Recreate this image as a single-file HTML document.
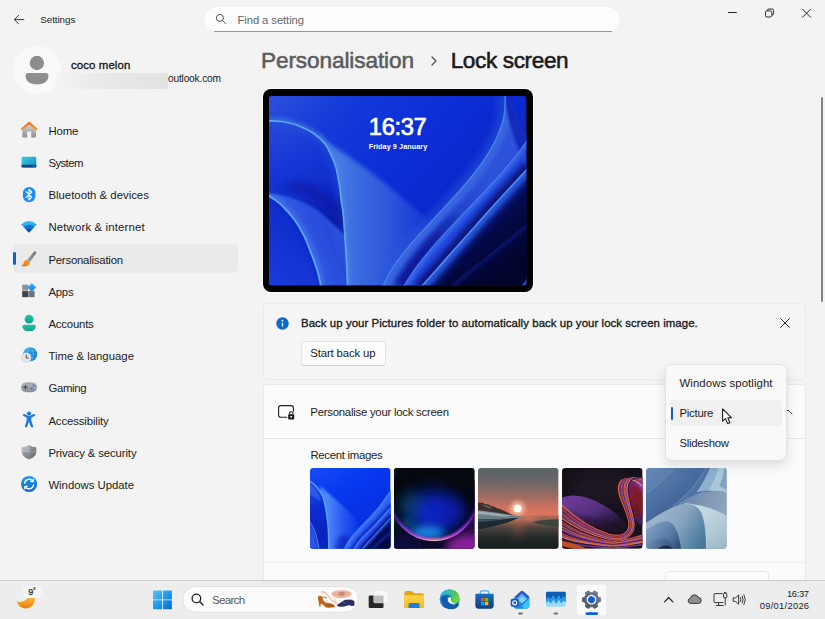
<!DOCTYPE html>
<html><head><meta charset="utf-8"><title>Settings</title>
<style>
*{box-sizing:border-box;margin:0;padding:0}
html,body{width:825px;height:619px;overflow:hidden;background:#f3f3f3;font-family:"Liberation Sans",sans-serif;color:#1b1b1b}
.a{position:absolute;white-space:nowrap}
.t{position:absolute;white-space:nowrap;line-height:16px;font-size:11.6px;transform-origin:0 50%}
.nav{left:48px;font-size:12px}
svg{position:absolute;overflow:visible}
</style></head><body>
<!-- TITLE BAR -->
<svg style="left:0;top:0" width="30" height="30" viewBox="0 0 30 30"><path d="M18.5 15.4 L14.4 19.6 L18.5 23.8 M14.4 19.6 H23.8" fill="none" stroke="#3a3a3a" stroke-width="1" stroke-linecap="round" stroke-linejoin="round"/></svg>
<div class="a" id="search" style="left:205.4px;top:7.1px;width:414px;height:25.3px;background:#fdfdfd;border-radius:12px;box-shadow:0 0 0 0.5px #f0f0f0"></div><div class="a" style="left:213.5px;top:30.9px;width:398px;height:1.25px;background:#979797;border-radius:0.6px"></div>
<svg style="left:215px;top:13.4px" width="12" height="12" viewBox="0 0 12 12"><circle cx="4.9" cy="4.9" r="3.5" fill="none" stroke="#4a4a4a" stroke-width="1"/><path d="M7.5 7.5 L10.6 10.6" stroke="#4a4a4a" stroke-width="1" stroke-linecap="round"/></svg>
<svg style="left:0;top:0" width="825" height="30" viewBox="0 0 825 30"><g fill="none" stroke="#2a2a2a" stroke-width="1"><path d="M728.3 12.5 H736.4" stroke-linecap="round"/><rect x="765.5" y="10.9" width="6.3" height="6.1" rx="1.5"/><path d="M767.4 10.6 V10.4 Q767.4 9 768.9 9 H772 Q773.6 9 773.6 10.6 V13.6 Q773.6 15.2 772.1 15.2"/><path d="M802.5 9.1 L810.7 17.3 M810.7 9.1 L802.5 17.3" stroke-linecap="round"/></g></svg>
<!-- scrollbar -->
<div class="a" style="left:820.8px;top:97.4px;width:2.2px;height:204.4px;background:#848484;border-radius:1.1px;box-shadow:0 0 0 0.6px #f8f8f8"></div>

<!-- SIDEBAR -->
<div class="a" style="left:13px;top:46px;width:48px;height:48px;border-radius:50%;background:#f9f9f9"></div>
<svg style="left:13px;top:46px" width="48" height="48" viewBox="0 0 48 48"><circle cx="23.9" cy="17" r="7.2" fill="#8d8d8d"/><path d="M12.6 29.6 Q12.6 27 15.2 27 H32.8 Q35.4 27 35.4 29.6 Q35.4 38.4 24 38.4 Q12.6 38.4 12.6 29.6Z" fill="#8d8d8d"/></svg>
<div class="a" style="left:56px;top:73px;width:112px;height:16px;background:linear-gradient(90deg,#f3f3f3 0%,#e9e9e9 40%,#e2e2e2 100%)"></div>

<div class="a" style="left:13px;top:244px;width:225px;height:29px;background:#eaeaea;border-radius:4px"></div>
<div class="a" style="left:12.9px;top:252.3px;width:2.8px;height:12.8px;background:#0f5fcc;border-radius:1.4px"></div>
<svg style="left:0;top:0" width="60" height="500" viewBox="0 0 60 500">
<defs>
<linearGradient id="iHomeR" x1="0" y1="0" x2="0" y2="1"><stop offset="0" stop-color="#e8721c"/><stop offset="1" stop-color="#f59a3a"/></linearGradient>
<linearGradient id="iHomeB" x1="0" y1="0" x2="0" y2="1"><stop offset="0" stop-color="#d6d6d6"/><stop offset="1" stop-color="#8e8e8e"/></linearGradient>
<linearGradient id="iSys" x1="0" y1="0" x2="1" y2="1"><stop offset="0" stop-color="#3ccbe6"/><stop offset="1" stop-color="#1588c6"/></linearGradient>
<linearGradient id="iWifi" x1="0" y1="0" x2="0" y2="1"><stop offset="0" stop-color="#38bdf4"/><stop offset="1" stop-color="#1a8ce0"/></linearGradient>
<linearGradient id="iBrushH" x1="1" y1="0" x2="0" y2="1"><stop offset="0" stop-color="#6e747c"/><stop offset="1" stop-color="#a0a6ae"/></linearGradient>
<linearGradient id="iBrushB" x1="1" y1="0" x2="0" y2="1"><stop offset="0" stop-color="#fba42c"/><stop offset="1" stop-color="#ea6a14"/></linearGradient>
<linearGradient id="iAcc" x1="0" y1="0" x2="0" y2="1"><stop offset="0" stop-color="#24c4a8"/><stop offset="1" stop-color="#12a08e"/></linearGradient>
<linearGradient id="iGlobe" x1="0" y1="0" x2="1" y2="1"><stop offset="0" stop-color="#30b4f0"/><stop offset="1" stop-color="#0f6cd0"/></linearGradient>
<linearGradient id="iShield" x1="0" y1="0" x2="1" y2="1"><stop offset="0" stop-color="#b4b8bc"/><stop offset="1" stop-color="#5c6066"/></linearGradient>
<linearGradient id="iPad" x1="0" y1="0" x2="0" y2="1"><stop offset="0" stop-color="#b2b6ba"/><stop offset="1" stop-color="#8c9096"/></linearGradient>
<linearGradient id="iUpd" x1="0" y1="0" x2="0" y2="1"><stop offset="0" stop-color="#1f96ea"/><stop offset="1" stop-color="#0c6cd0"/></linearGradient>
<linearGradient id="iDia" x1="0" y1="0" x2="1" y2="1"><stop offset="0" stop-color="#3cb4f6"/><stop offset="1" stop-color="#1c7ce0"/></linearGradient>
</defs>
<!-- Home -->
<path d="M22.3 128.6 L29.1 123.4 L36 128.6 V136.3 Q36 137.6 34.7 137.6 H31.2 V131.4 H27.2 V137.6 H23.6 Q22.3 137.6 22.3 136.3 Z" fill="url(#iHomeB)"/>
<path d="M21.9 129.2 L29.1 122.9 L36.3 129.2" fill="none" stroke="url(#iHomeR)" stroke-width="2.2" stroke-linecap="round" stroke-linejoin="round"/>
<!-- System -->
<rect x="21.6" y="156.7" width="14.7" height="10.8" rx="1.3" fill="url(#iSys)"/>
<path d="M21.6 164.8 H36.3 V166.2 Q36.3 167.5 35 167.5 H22.9 Q21.6 167.5 21.6 166.2 Z" fill="#0b4a7c"/>
<rect x="32.6" y="165.8" width="2.4" height="0.7" fill="#4aa0d0"/>
<!-- Bluetooth -->
<rect x="22.9" y="186.9" width="12.5" height="15.4" rx="6.2" fill="#1b8af2"/>
<path d="M26 191.6 L31.8 197.1 L29 199.9 V189.2 L31.8 192 L26 197.6" fill="none" stroke="#fff" stroke-width="1.15" stroke-linejoin="round" stroke-linecap="round"/>
<!-- Network -->
<path d="M29 232.6 L21 224.4 Q29 217.6 36.8 224.4 Z" fill="url(#iWifi)"/>
<path d="M29 232.6 L23.6 227 Q29 222.6 34.3 227 Z" fill="#1672d2"/>
<path d="M29 232.6 L26.2 229.7 Q29 227.6 31.8 229.7 Z" fill="#0c4fa8"/>
<!-- Personalisation brush -->
<path d="M35.6 251.5 Q36.9 252.4 36 253.8 L29.6 262.2 L26.9 260.2 L33.6 252 Q34.5 250.8 35.6 251.5Z" fill="url(#iBrushH)"/>
<path d="M26.6 259.8 L29.9 262.3 Q29.6 265.6 26 266.2 Q23.2 266.8 21.3 266 Q23.6 264.8 23.8 262.6 Q24.2 260.2 26.6 259.8Z" fill="url(#iBrushB)"/>
<!-- Apps -->
<rect x="22.2" y="284.6" width="6" height="6" fill="#8c9298"/>
<rect x="22.2" y="290.8" width="6" height="6.4" fill="#3c444c"/>
<rect x="28.4" y="290.8" width="6.2" height="6.4" fill="#70767e"/>
<path d="M22.2 290.6 H34.6" stroke="#f3f3f3" stroke-width="0.4"/>
<rect x="-3.1" y="-3.1" width="6.2" height="6.2" rx="0.6" transform="translate(31.8 287.4) rotate(45)" fill="url(#iDia)"/>
<!-- Accounts -->
<circle cx="29.1" cy="319.2" r="4.4" fill="url(#iAcc)"/>
<path d="M22.4 326.3 Q22.4 324.7 24 324.7 H34.2 Q35.8 324.7 35.8 326.3 Q35.8 331.3 29.1 331.3 Q22.4 331.3 22.4 326.3Z" fill="url(#iAcc)"/>
<!-- Time & language -->
<circle cx="30.2" cy="354.3" r="7" fill="url(#iGlobe)"/>
<g fill="none" stroke="#7ad0f8" stroke-width="0.5" opacity="0.8"><ellipse cx="30.2" cy="354.3" rx="3" ry="7"/><path d="M23.2 354.3 H37.2 M24.2 350.8 H36.2 M24.2 357.8 H36.2"/></g>
<circle cx="26.2" cy="357.6" r="4.9" fill="#e6e6e6" stroke="#c8c8c8" stroke-width="0.5"/>
<path d="M26.2 355 V358 H28.4" fill="none" stroke="#3a3a3a" stroke-width="0.9" stroke-linecap="round" stroke-linejoin="round"/>
<!-- Gaming -->
<rect x="21" y="382.2" width="16.1" height="10" rx="5" fill="url(#iPad)"/>
<path d="M25.4 385 V389.4 M23.2 387.2 H27.6" stroke="#3a3e44" stroke-width="1" />
<circle cx="33.8" cy="385.6" r="1" fill="#1a7ae8"/><circle cx="31.6" cy="388.6" r="1" fill="#1a7ae8"/>
<circle cx="28" cy="383.6" r="0.35" fill="#555"/><circle cx="30" cy="383.6" r="0.35" fill="#555"/>
<!-- Accessibility -->
<circle cx="29" cy="413.6" r="2.1" fill="#1a7ade"/>
<path d="M22.9 414.6 Q23.3 413.6 24.4 414 L29 416.2 L33.6 414 Q34.7 413.6 35.1 414.6 Q35.4 415.6 34.4 416.1 L31.3 417.8 V420.6 L33 426 Q33.3 427.1 32.3 427.4 Q31.3 427.7 30.9 426.7 L29 421.8 L27.1 426.7 Q26.7 427.7 25.7 427.4 Q24.7 427.1 25 426 L26.7 420.6 V417.8 L23.6 416.1 Q22.6 415.6 22.9 414.6Z" fill="#1a7ade"/>
<!-- Privacy -->
<path d="M29 444.9 Q32.6 447 36.3 447.2 V451.5 Q36.3 457 29 459.6 Q21.7 457 21.7 451.5 V447.2 Q25.4 447 29 444.9Z" fill="url(#iShield)"/>
<path d="M29 444.9 V459.6 M21.7 451.8 H36.3" stroke="#d0d2d4" stroke-width="0.45" opacity="0.7"/>
<path d="M29 444.9 Q25.4 447 21.7 447.2 V451.8 H29Z" fill="#c8cacc" opacity="0.5"/>
<!-- Windows Update -->
<circle cx="29.1" cy="484" r="8.1" fill="url(#iUpd)"/>
<g fill="none" stroke="#fff" stroke-width="1.3" stroke-linecap="round" stroke-linejoin="round">
<path d="M24.6 483.2 A4.6 4.6 0 0 1 32.9 481.2"/><path d="M33.3 479.2 V481.6 H30.9"/>
<path d="M33.6 484.8 A4.6 4.6 0 0 1 25.3 486.8"/><path d="M24.9 488.8 V486.4 H27.3"/>
</g>
</svg>


<!-- HEADER -->
<svg style="left:430.2px;top:56px" width="8" height="10" viewBox="0 0 8 10"><path d="M2 1 L6 5 L2 9" fill="none" stroke="#555" stroke-width="1.3" stroke-linecap="round" stroke-linejoin="round"/></svg>

<!-- PREVIEW -->
<div class="a" id="frame" style="left:263px;top:89px;width:269.5px;height:202.7px;background:#000;border-radius:8px;box-shadow:0 0 0 1px #fafafa"></div>
<svg id="wall" style="left:269.0px;top:95.8px" width="257.3" height="189.2" viewBox="0 0 257.3 189.2">
<defs>
<clipPath id="wc"><rect x="0" y="0" width="257.3" height="189.2" rx="2.5"/></clipPath>
<clipPath id="cL"><path d="M-3.0 24.9 C-2.5 24.9 -2.5 24.8 0.0 24.9 C2.5 25.0 7.5 24.8 12.2 25.5 C16.9 26.2 22.9 27.2 28.3 29.2 C33.7 31.2 39.9 34.2 44.5 37.3 C49.1 40.4 52.8 44.2 55.8 47.8 C58.8 51.4 60.3 55.1 62.2 59.1 C64.1 63.1 65.8 67.2 67.1 72.1 C68.4 76.9 69.4 82.8 70.3 88.2 C71.2 93.6 71.5 99.1 72.2 104.2 C72.9 109.3 73.7 112.1 74.3 118.6 C74.9 125.1 75.5 134.9 76.1 143.0 C76.6 151.1 77.2 158.7 77.6 166.9 C78.0 175.1 78.5 187.8 78.7 192.0 L-3 192 L-3 24.9 Z"/></clipPath>
<clipPath id="cR"><path d="M-3.0 24.9 C-2.5 24.9 -2.5 24.8 0.0 24.9 C2.5 25.0 7.5 24.8 12.2 25.5 C16.9 26.2 22.9 27.2 28.3 29.2 C33.7 31.2 39.9 34.2 44.5 37.3 C49.1 40.4 52.8 44.2 55.8 47.8 C58.8 51.4 60.3 55.1 62.2 59.1 C64.1 63.1 65.8 67.2 67.1 72.1 C68.4 76.9 69.4 82.8 70.3 88.2 C71.2 93.6 71.5 99.1 72.2 104.2 C72.9 109.3 73.7 112.1 74.3 118.6 C74.9 125.1 75.5 134.9 76.1 143.0 C76.6 151.1 77.2 158.7 77.6 166.9 C78.0 175.1 78.5 187.8 78.7 192.0 L260 192 L260 -3 L-3 -3 Z"/></clipPath>
<clipPath id="cBelowB"><path d="M-3.0 98.0 C-2.5 98.3 -2.5 98.1 0.0 99.9 C2.5 101.7 8.0 104.8 12.2 108.7 C16.4 112.6 21.3 118.2 25.1 123.3 C28.9 128.4 31.8 133.5 34.8 139.4 C37.8 145.3 40.5 152.9 42.8 158.8 C45.1 164.7 46.9 169.5 48.5 175.0 C50.1 180.5 51.8 189.2 52.5 192.0 L-3 192 Z"/></clipPath>
<clipPath id="cBf"><path d="M-3.0 98.0 C-2.5 98.3 -2.5 98.1 0.0 99.9 C2.5 101.7 8.0 104.8 12.2 108.7 C16.4 112.6 21.3 118.2 25.1 123.3 C28.9 128.4 31.8 133.5 34.8 139.4 C37.8 145.3 40.5 152.9 42.8 158.8 C45.1 164.7 46.9 169.5 48.5 175.0 C50.1 180.5 51.8 189.2 52.5 192.0 L80 192 L80 138.6 L75.3 138.6 C73.1 136.5 67.0 130.4 62.0 126.0 C57.0 121.6 52.0 116.2 45.0 112.0 C38.0 107.8 27.5 103.4 20.0 101.0 C12.5 98.6 3.3 98.1 0.0 97.5 Z"/></clipPath>
<clipPath id="c1"><path d="M236.1 -2.8 C236.0 0.8 236.5 11.7 235.2 19.0 C233.9 26.2 231.4 33.5 228.2 40.8 C225.0 48.0 220.8 55.3 216.0 62.5 C211.2 69.8 205.5 77.1 199.6 84.3 C193.7 91.6 187.1 98.8 180.5 106.1 C173.9 113.3 166.9 120.6 160.2 127.9 C153.6 135.1 146.7 142.4 140.7 149.6 C134.6 156.9 128.7 164.2 124.0 171.4 C119.3 178.7 114.5 189.6 112.6 193.2 L133.5 192.2 C135.5 189.1 141.2 179.7 145.7 173.4 C150.2 167.2 155.3 160.9 160.5 154.7 C165.8 148.4 171.5 142.2 177.2 135.9 C182.9 129.7 189.0 123.5 194.9 117.2 C200.9 111.0 207.0 104.7 212.9 98.5 C218.7 92.2 224.6 86.0 230.2 79.7 C235.7 73.5 241.2 67.2 246.1 61.0 C251.1 54.7 257.5 45.3 259.8 42.2 Z"/></clipPath>
<clipPath id="c2"><path d="M259.8 42.2 C257.5 45.3 251.1 54.7 246.1 61.0 C241.2 67.2 235.7 73.5 230.2 79.7 C224.6 86.0 218.7 92.2 212.9 98.5 C207.0 104.7 200.9 111.0 194.9 117.2 C189.0 123.5 182.9 129.7 177.2 135.9 C171.5 142.2 165.8 148.4 160.5 154.7 C155.3 160.9 150.2 167.2 145.7 173.4 C141.2 179.7 135.5 189.1 133.5 192.2 L151.0 192.2 C153.2 189.7 160.0 182.1 164.5 177.1 C169.0 172.0 173.5 167.0 177.9 161.9 C182.4 156.9 186.8 151.9 191.3 146.8 C195.8 141.8 200.3 136.7 204.8 131.7 C209.3 126.7 213.8 121.6 218.3 116.6 C222.8 111.5 227.4 106.5 232.0 101.5 C236.6 96.4 241.3 91.4 246.0 86.3 C250.7 81.3 257.8 73.7 260.2 71.2 Z"/></clipPath>
<clipPath id="c3"><path d="M260.2 71.2 C257.8 73.7 250.7 81.3 246.0 86.3 C241.3 91.4 236.6 96.4 232.0 101.5 C227.4 106.5 222.8 111.5 218.3 116.6 C213.8 121.6 209.3 126.7 204.8 131.7 C200.3 136.7 195.8 141.8 191.3 146.8 C186.8 151.9 182.4 156.9 177.9 161.9 C173.5 167.0 169.0 172.0 164.5 177.1 C160.0 182.1 153.2 189.7 151.0 192.2 L260 192 L260 70 Z"/></clipPath>
<clipPath id="c4"><path d="M260.1 126.2 C257.8 128.0 251.0 133.5 246.4 137.2 C241.9 140.9 237.3 144.5 232.7 148.2 C228.2 151.9 223.6 155.5 219.0 159.2 C214.4 162.9 209.8 166.5 205.2 170.2 C200.7 173.9 196.1 177.5 191.5 181.2 C186.9 184.9 180.0 190.4 177.7 192.2 L260 192 L260 125 Z"/></clipPath>
<clipPath id="cLeft1"><path d="M236.1 -2.8 C236.0 0.8 236.5 11.7 235.2 19.0 C233.9 26.2 231.4 33.5 228.2 40.8 C225.0 48.0 220.8 55.3 216.0 62.5 C211.2 69.8 205.5 77.1 199.6 84.3 C193.7 91.6 187.1 98.8 180.5 106.1 C173.9 113.3 166.9 120.6 160.2 127.9 C153.6 135.1 146.7 142.4 140.7 149.6 C134.6 156.9 128.7 164.2 124.0 171.4 C119.3 178.7 114.5 189.6 112.6 193.2 L-3 192 L-3 -3 Z"/></clipPath>
<linearGradient id="wbg" gradientUnits="userSpaceOnUse" x1="0" y1="0" x2="200" y2="189"><stop offset="0" stop-color="#2c50dc"/><stop offset="0.22" stop-color="#143ad9"/><stop offset="0.5" stop-color="#0b2ed6"/><stop offset="0.8" stop-color="#0a26c8"/><stop offset="1" stop-color="#0a1fb4"/></linearGradient>
<linearGradient id="gL" gradientUnits="userSpaceOnUse" x1="15" y1="30" x2="66" y2="135"><stop offset="0" stop-color="#2246da"/><stop offset="0.3" stop-color="#1638d6"/><stop offset="0.62" stop-color="#102ecc"/><stop offset="0.85" stop-color="#0a22b4"/><stop offset="1" stop-color="#071a9c"/></linearGradient>
<linearGradient id="gBf" gradientUnits="userSpaceOnUse" x1="22" y1="150" x2="80" y2="125"><stop offset="0" stop-color="#3c68e6"/><stop offset="0.2" stop-color="#3058e0"/><stop offset="0.6" stop-color="#284cdc"/><stop offset="1" stop-color="#2c54de"/></linearGradient>
<linearGradient id="gBl" gradientUnits="userSpaceOnUse" x1="0" y1="189" x2="40" y2="140"><stop offset="0" stop-color="#1a3cdc"/><stop offset="1" stop-color="#0f2ecc"/></linearGradient>
<linearGradient id="gA" gradientUnits="userSpaceOnUse" x1="72" y1="0" x2="175" y2="0"><stop offset="0" stop-color="#4678e4"/><stop offset="0.15" stop-color="#3c6ce0"/><stop offset="0.45" stop-color="#2e58dc"/><stop offset="0.8" stop-color="#1c40d6" stop-opacity="0.8"/><stop offset="1" stop-color="#0d2ed4" stop-opacity="0"/></linearGradient>
<linearGradient id="gN" gradientUnits="userSpaceOnUse" x1="200" y1="110" x2="245" y2="170"><stop offset="0" stop-color="#09167c"/><stop offset="0.3" stop-color="#050b50"/><stop offset="1" stop-color="#02042c"/></linearGradient>
<linearGradient id="gSh1" gradientUnits="userSpaceOnUse" x1="225" y1="85" x2="150" y2="170"><stop offset="0" stop-color="#0a1a98" stop-opacity="0"/><stop offset="0.35" stop-color="#0a1a98" stop-opacity="0.15"/><stop offset="0.7" stop-color="#0a1a98" stop-opacity="0.85"/><stop offset="1" stop-color="#0a1a98" stop-opacity="0.95"/></linearGradient>
<filter id="b05" x="-20%" y="-20%" width="140%" height="140%"><feGaussianBlur stdDeviation="0.6"/></filter>
<filter id="b1" x="-20%" y="-20%" width="140%" height="140%"><feGaussianBlur stdDeviation="1.2"/></filter>
<filter id="b2" x="-30%" y="-30%" width="160%" height="160%"><feGaussianBlur stdDeviation="2.2"/></filter>
<filter id="b3" x="-30%" y="-30%" width="160%" height="160%"><feGaussianBlur stdDeviation="3.5"/></filter>
<filter id="b6" x="-40%" y="-40%" width="180%" height="180%"><feGaussianBlur stdDeviation="7"/></filter>
</defs>
<g clip-path="url(#wc)">
<rect x="-3" y="-3" width="264" height="196" fill="url(#wbg)"/>
<!-- right-of-A: fan face -->
<g clip-path="url(#cR)">
  <ellipse cx="115" cy="200" rx="38" ry="55" fill="#0920b0" opacity="0.55" filter="url(#b6)"/>
  <g filter="url(#b2)"><path d="M50 36 L57 46 C95 68 140 105 185 150 L150 200 H70 Z" fill="url(#gA)"/></g>
  <path d="M-3.0 24.9 C-2.5 24.9 -2.5 24.8 0.0 24.9 C2.5 25.0 7.5 24.8 12.2 25.5 C16.9 26.2 22.9 27.2 28.3 29.2 C33.7 31.2 39.9 34.2 44.5 37.3 C49.1 40.4 52.8 44.2 55.8 47.8 C58.8 51.4 60.3 55.1 62.2 59.1 C64.1 63.1 65.8 67.2 67.1 72.1 C68.4 76.9 69.4 82.8 70.3 88.2 C71.2 93.6 71.5 99.1 72.2 104.2 C72.9 109.3 73.7 112.1 74.3 118.6 C74.9 125.1 75.5 134.9 76.1 143.0 C76.6 151.1 77.2 158.7 77.6 166.9 C78.0 175.1 78.5 187.8 78.7 192.0" fill="none" stroke="#4d86e6" stroke-width="7" opacity="0.55" filter="url(#b2)"/>
</g>
<!-- left region -->
<g clip-path="url(#cL)">
  <rect x="-3" y="-3" width="90" height="196" fill="url(#gL)"/>
  <path d="M-3.0 24.9 C-2.5 24.9 -2.5 24.8 0.0 24.9 C2.5 25.0 7.5 24.8 12.2 25.5 C16.9 26.2 22.9 27.2 28.3 29.2 C33.7 31.2 39.9 34.2 44.5 37.3 C49.1 40.4 52.8 44.2 55.8 47.8 C58.8 51.4 60.3 55.1 62.2 59.1 C64.1 63.1 65.8 67.2 67.1 72.1 C68.4 76.9 69.4 82.8 70.3 88.2 C71.2 93.6 71.5 99.1 72.2 104.2 C72.9 109.3 73.7 112.1 74.3 118.6 C74.9 125.1 75.5 134.9 76.1 143.0 C76.6 151.1 77.2 158.7 77.6 166.9 C78.0 175.1 78.5 187.8 78.7 192.0" fill="none" stroke="#3560e0" stroke-width="9" opacity="0.35" filter="url(#b3)"/>
  <path d="M10 92 C30 96 50 106 62 118 L76 132 L80 139 L80 120 C70 104 50 88 30 84 Z" fill="#0819a0" opacity="0.55" filter="url(#b3)"/>
  <!-- B face -->
  <g filter="url(#b1)"><path d="M-3.0 98.0 C-2.5 98.3 -2.5 98.1 0.0 99.9 C2.5 101.7 8.0 104.8 12.2 108.7 C16.4 112.6 21.3 118.2 25.1 123.3 C28.9 128.4 31.8 133.5 34.8 139.4 C37.8 145.3 40.5 152.9 42.8 158.8 C45.1 164.7 46.9 169.5 48.5 175.0 C50.1 180.5 51.8 189.2 52.5 192.0 L80 192 L80 138.6 L75.3 138.6 C73.1 136.5 67.0 130.4 62.0 126.0 C57.0 121.6 52.0 116.2 45.0 112.0 C38.0 107.8 27.5 103.4 20.0 101.0 C12.5 98.6 3.3 98.1 0.0 97.5 Z" fill="url(#gBf)"/></g>
  <g clip-path="url(#cBf)"><path d="M-3.0 98.0 C-2.5 98.3 -2.5 98.1 0.0 99.9 C2.5 101.7 8.0 104.8 12.2 108.7 C16.4 112.6 21.3 118.2 25.1 123.3 C28.9 128.4 31.8 133.5 34.8 139.4 C37.8 145.3 40.5 152.9 42.8 158.8 C45.1 164.7 46.9 169.5 48.5 175.0 C50.1 180.5 51.8 189.2 52.5 192.0" fill="none" stroke="#4674ea" stroke-width="9" opacity="0.7" filter="url(#b2)"/></g>
  <!-- below B -->
  <path d="M-3.0 98.0 C-2.5 98.3 -2.5 98.1 0.0 99.9 C2.5 101.7 8.0 104.8 12.2 108.7 C16.4 112.6 21.3 118.2 25.1 123.3 C28.9 128.4 31.8 133.5 34.8 139.4 C37.8 145.3 40.5 152.9 42.8 158.8 C45.1 164.7 46.9 169.5 48.5 175.0 C50.1 180.5 51.8 189.2 52.5 192.0 L-3 192 Z" fill="url(#gBl)"/>
  <path d="M-3.0 98.0 C-2.5 98.3 -2.5 98.1 0.0 99.9 C2.5 101.7 8.0 104.8 12.2 108.7 C16.4 112.6 21.3 118.2 25.1 123.3 C28.9 128.4 31.8 133.5 34.8 139.4 C37.8 145.3 40.5 152.9 42.8 158.8 C45.1 164.7 46.9 169.5 48.5 175.0 C50.1 180.5 51.8 189.2 52.5 192.0" fill="none" stroke="#0a24c0" stroke-width="6" opacity="0.35" filter="url(#b2)" clip-path="url(#cBelowB)"/>
  <path d="M-3.0 98.0 C-2.5 98.3 -2.5 98.1 0.0 99.9 C2.5 101.7 8.0 104.8 12.2 108.7 C16.4 112.6 21.3 118.2 25.1 123.3 C28.9 128.4 31.8 133.5 34.8 139.4 C37.8 145.3 40.5 152.9 42.8 158.8 C45.1 164.7 46.9 169.5 48.5 175.0 C50.1 180.5 51.8 189.2 52.5 192.0" fill="none" stroke="#5aa6ee" stroke-width="1.9" filter="url(#b05)"/>
</g>
<path d="M-3.0 24.9 C-2.5 24.9 -2.5 24.8 0.0 24.9 C2.5 25.0 7.5 24.8 12.2 25.5 C16.9 26.2 22.9 27.2 28.3 29.2 C33.7 31.2 39.9 34.2 44.5 37.3 C49.1 40.4 52.8 44.2 55.8 47.8 C58.8 51.4 60.3 55.1 62.2 59.1 C64.1 63.1 65.8 67.2 67.1 72.1 C68.4 76.9 69.4 82.8 70.3 88.2 C71.2 93.6 71.5 99.1 72.2 104.2 C72.9 109.3 73.7 112.1 74.3 118.6 C74.9 125.1 75.5 134.9 76.1 143.0 C76.6 151.1 77.2 158.7 77.6 166.9 C78.0 175.1 78.5 187.8 78.7 192.0" fill="none" stroke="#5aa8ea" stroke-width="1.7" filter="url(#b05)"/>

<!-- RIGHT SIDE -->
<!-- glow left of R1 -->
<g clip-path="url(#cLeft1)"><path d="M236.1 -2.8 C236.0 0.8 236.5 11.7 235.2 19.0 C233.9 26.2 231.4 33.5 228.2 40.8 C225.0 48.0 220.8 55.3 216.0 62.5 C211.2 69.8 205.5 77.1 199.6 84.3 C193.7 91.6 187.1 98.8 180.5 106.1 C173.9 113.3 166.9 120.6 160.2 127.9 C153.6 135.1 146.7 142.4 140.7 149.6 C134.6 156.9 128.7 164.2 124.0 171.4 C119.3 178.7 114.5 189.6 112.6 193.2" fill="none" stroke="#2a58dc" stroke-width="14" opacity="0.5" filter="url(#b3)"/></g>
<!-- band1 -->
<g clip-path="url(#c1)">
  <rect x="100" y="-3" width="160" height="196" fill="#2c52da"/>
  <path d="M236.1 -2.8 C236.0 0.8 236.5 11.7 235.2 19.0 C233.9 26.2 231.4 33.5 228.2 40.8 C225.0 48.0 220.8 55.3 216.0 62.5 C211.2 69.8 205.5 77.1 199.6 84.3 C193.7 91.6 187.1 98.8 180.5 106.1 C173.9 113.3 166.9 120.6 160.2 127.9 C153.6 135.1 146.7 142.4 140.7 149.6 C134.6 156.9 128.7 164.2 124.0 171.4 C119.3 178.7 114.5 189.6 112.6 193.2" fill="none" stroke="#3b68e0" stroke-width="14" opacity="0.9" filter="url(#b2)"/>
  <path d="M259.8 42.2 C257.5 45.3 251.1 54.7 246.1 61.0 C241.2 67.2 235.7 73.5 230.2 79.7 C224.6 86.0 218.7 92.2 212.9 98.5 C207.0 104.7 200.9 111.0 194.9 117.2 C189.0 123.5 182.9 129.7 177.2 135.9 C171.5 142.2 165.8 148.4 160.5 154.7 C155.3 160.9 150.2 167.2 145.7 173.4 C141.2 179.7 135.5 189.1 133.5 192.2" fill="none" stroke="url(#gSh1)" stroke-width="19" filter="url(#b2)"/>
  <!-- back side top right -->
  <path d="M236.9 -1.8 C237.0 -0.8 236.8 0.2 237.5 4.2 C238.2 8.2 239.6 16.4 241.0 22.2 C242.4 28.0 244.4 34.3 246.0 39.2 C247.6 44.1 249.7 49.1 250.7 51.9 C251.7 54.7 251.8 55.5 252.0 56.2 L262 47 L262 -3 Z" fill="#142cbc"/>
  <path d="M236.9 -1.8 C237.0 -0.8 236.8 0.2 237.5 4.2 C238.2 8.2 239.6 16.4 241.0 22.2 C242.4 28.0 244.4 34.3 246.0 39.2 C247.6 44.1 249.7 49.1 250.7 51.9 C251.7 54.7 251.8 55.5 252.0 56.2" fill="none" stroke="#142cbc" stroke-width="3" filter="url(#b1)"/>
</g>
<!-- band2 -->
<g clip-path="url(#c2)">
  <rect x="100" y="-3" width="160" height="196" fill="#2348de"/>
  <path d="M259.8 42.2 C257.5 45.3 251.1 54.7 246.1 61.0 C241.2 67.2 235.7 73.5 230.2 79.7 C224.6 86.0 218.7 92.2 212.9 98.5 C207.0 104.7 200.9 111.0 194.9 117.2 C189.0 123.5 182.9 129.7 177.2 135.9 C171.5 142.2 165.8 148.4 160.5 154.7 C155.3 160.9 150.2 167.2 145.7 173.4 C141.2 179.7 135.5 189.1 133.5 192.2" fill="none" stroke="#3564e4" stroke-width="8" opacity="0.9" filter="url(#b1)"/>
  <path d="M260.2 71.2 C257.8 73.7 250.7 81.3 246.0 86.3 C241.3 91.4 236.6 96.4 232.0 101.5 C227.4 106.5 222.8 111.5 218.3 116.6 C213.8 121.6 209.3 126.7 204.8 131.7 C200.3 136.7 195.8 141.8 191.3 146.8 C186.8 151.9 182.4 156.9 177.9 161.9 C173.5 167.0 169.0 172.0 164.5 177.1 C160.0 182.1 153.2 189.7 151.0 192.2" fill="none" stroke="#08147c" stroke-width="14" opacity="0.95" filter="url(#b2)"/>
</g>
<!-- band3 -->
<g clip-path="url(#c3)">
  <rect x="100" y="-3" width="160" height="196" fill="url(#gN)"/>
  <path d="M260.2 71.2 C257.8 73.7 250.7 81.3 246.0 86.3 C241.3 91.4 236.6 96.4 232.0 101.5 C227.4 106.5 222.8 111.5 218.3 116.6 C213.8 121.6 209.3 126.7 204.8 131.7 C200.3 136.7 195.8 141.8 191.3 146.8 C186.8 151.9 182.4 156.9 177.9 161.9 C173.5 167.0 169.0 172.0 164.5 177.1 C160.0 182.1 153.2 189.7 151.0 192.2" fill="none" stroke="#0f2aa8" stroke-width="20" opacity="0.6" filter="url(#b3)"/>
  <path d="M260.2 71.2 C257.8 73.7 250.7 81.3 246.0 86.3 C241.3 91.4 236.6 96.4 232.0 101.5 C227.4 106.5 222.8 111.5 218.3 116.6 C213.8 121.6 209.3 126.7 204.8 131.7 C200.3 136.7 195.8 141.8 191.3 146.8 C186.8 151.9 182.4 156.9 177.9 161.9 C173.5 167.0 169.0 172.0 164.5 177.1 C160.0 182.1 153.2 189.7 151.0 192.2" fill="none" stroke="#2c5ce2" stroke-width="11" opacity="0.95" filter="url(#b2)"/>
</g>
<g clip-path="url(#c4)">
  <path d="M260.1 126.2 C257.8 128.0 251.0 133.5 246.4 137.2 C241.9 140.9 237.3 144.5 232.7 148.2 C228.2 151.9 223.6 155.5 219.0 159.2 C214.4 162.9 209.8 166.5 205.2 170.2 C200.7 173.9 196.1 177.5 191.5 181.2 C186.9 184.9 180.0 190.4 177.7 192.2" fill="none" stroke="#0c1a80" stroke-width="7" opacity="0.7" filter="url(#b2)"/>
</g>
<g fill="none">
<path d="M236.1 -2.8 C236.0 0.8 236.5 11.7 235.2 19.0 C233.9 26.2 231.4 33.5 228.2 40.8 C225.0 48.0 220.8 55.3 216.0 62.5 C211.2 69.8 205.5 77.1 199.6 84.3 C193.7 91.6 187.1 98.8 180.5 106.1 C173.9 113.3 166.9 120.6 160.2 127.9 C153.6 135.1 146.7 142.4 140.7 149.6 C134.6 156.9 128.7 164.2 124.0 171.4 C119.3 178.7 114.5 189.6 112.6 193.2" stroke="#4a86e8" stroke-width="1.5" filter="url(#b05)" opacity="0.9"/>
<path d="M259.8 42.2 C257.5 45.3 251.1 54.7 246.1 61.0 C241.2 67.2 235.7 73.5 230.2 79.7 C224.6 86.0 218.7 92.2 212.9 98.5 C207.0 104.7 200.9 111.0 194.9 117.2 C189.0 123.5 182.9 129.7 177.2 135.9 C171.5 142.2 165.8 148.4 160.5 154.7 C155.3 160.9 150.2 167.2 145.7 173.4 C141.2 179.7 135.5 189.1 133.5 192.2" stroke="#4a80ea" stroke-width="1.4" filter="url(#b05)" opacity="0.85"/>
<path d="M260.2 71.2 C257.8 73.7 250.7 81.3 246.0 86.3 C241.3 91.4 236.6 96.4 232.0 101.5 C227.4 106.5 222.8 111.5 218.3 116.6 C213.8 121.6 209.3 126.7 204.8 131.7 C200.3 136.7 195.8 141.8 191.3 146.8 C186.8 151.9 182.4 156.9 177.9 161.9 C173.5 167.0 169.0 172.0 164.5 177.1 C160.0 182.1 153.2 189.7 151.0 192.2" stroke="#4f8cee" stroke-width="1.6" filter="url(#b05)"/>
</g>
<path d="M249 192 Q257 187 258 180 V192Z" fill="#2a4cd8"/>
</g>
<text x="128.6" y="38.9" text-anchor="middle" font-family="Liberation Sans, sans-serif" font-size="23.7" fill="#fff" stroke="#fff" stroke-width="0.7" letter-spacing="-0.35">16:37</text>
<text x="129" y="53.4" text-anchor="middle" font-family="Liberation Sans, sans-serif" font-weight="bold" font-size="7.3" fill="#fff" letter-spacing="0.05">Friday 9 January</text>
</svg>


<!-- INFO CARD -->
<div class="a" id="info" style="left:263px;top:303.3px;width:543px;height:77.2px;background:#f5f5f5;border:1px solid #e9e9e9;border-radius:4px"></div>
<svg style="left:276px;top:317px" width="13" height="13" viewBox="0 0 13 13"><circle cx="6.5" cy="6.5" r="6.2" fill="#0b6ad0"/><circle cx="6.5" cy="3.7" r="0.85" fill="#fff"/><rect x="5.85" y="5.4" width="1.3" height="4.3" rx="0.6" fill="#fff"/></svg>
<div class="a" id="btn" style="left:301px;top:340.5px;width:84.5px;height:25px;background:#fdfdfd;border:1px solid #e3e3e3;border-bottom-color:#cfcfcf;border-radius:4px"></div>
<svg style="left:780.3px;top:317.8px" width="10" height="10" viewBox="0 0 10 10"><path d="M0.6 0.6 L9.4 9.4 M9.4 0.6 L0.6 9.4" stroke="#2a2a2a" stroke-width="1" stroke-linecap="round"/></svg>

<!-- PERSONALISE CARD -->
<div class="a" id="card2" style="left:263px;top:383.8px;width:543px;height:200px;background:#fbfbfb;border:1px solid #e8e8e8;border-radius:4px"></div>
<div class="a" style="left:264px;top:438px;width:541px;height:1px;background:#e8e8e8"></div>
<div class="a" style="left:264px;top:561.7px;width:541px;height:1.2px;background:#ebebeb"></div>
<svg style="left:278px;top:405.1px" width="17" height="15" viewBox="0 0 17 15"><path d="M8.8 12.3 H3 Q0.6 12.3 0.6 9.9 V3 Q0.6 0.6 3 0.6 H13 Q15.4 0.6 15.4 3 V6.2" fill="none" stroke="#222" stroke-width="1.1" stroke-linecap="round"/><rect x="10.2" y="9.3" width="6" height="5.1" rx="0.7" fill="#1a1a1a"/><path d="M11.5 9.4 V8.4 Q11.5 6.7 13.2 6.7 Q14.9 6.7 14.9 8.4 V9.4" fill="none" stroke="#1a1a1a" stroke-width="1.05"/><rect x="12.3" y="11" width="1.8" height="1.5" rx="0.3" fill="#fbfbfb"/></svg>
<svg style="left:783px;top:409px" width="10" height="6" viewBox="0 0 10 6"><path d="M1 5 L5 1 L9 5" fill="none" stroke="#444" stroke-width="1" stroke-linecap="round" stroke-linejoin="round"/></svg>
<svg width="0" height="0" style="left:0;top:0"><defs>
<filter id="tb05" x="-30%" y="-30%" width="160%" height="160%"><feGaussianBlur stdDeviation="0.45"/></filter>
<filter id="tb1" x="-30%" y="-30%" width="160%" height="160%"><feGaussianBlur stdDeviation="1"/></filter>
<filter id="tb2" x="-40%" y="-40%" width="180%" height="180%"><feGaussianBlur stdDeviation="2"/></filter>
<filter id="tb4" x="-50%" y="-50%" width="200%" height="200%"><feGaussianBlur stdDeviation="4"/></filter>
<filter id="tb7" x="-60%" y="-60%" width="220%" height="220%"><feGaussianBlur stdDeviation="7"/></filter>
</defs></svg>
<svg style="left:310.3px;top:468.0px" width="80.6" height="80.8" viewBox="0 0 80 80" preserveAspectRatio="none">
<defs><clipPath id="tc0"><rect width="80" height="80" rx="3.2"/></clipPath><linearGradient id="t1bg" x1="0" y1="0" x2="0.6" y2="1"><stop offset="0" stop-color="#164cf4"/><stop offset="0.4" stop-color="#0638f0"/><stop offset="1" stop-color="#062ad8"/></linearGradient>
<linearGradient id="t1A" gradientUnits="userSpaceOnUse" x1="17" y1="0" x2="52" y2="0"><stop offset="0" stop-color="#4c88f8"/><stop offset="0.3" stop-color="#3668f4"/><stop offset="0.75" stop-color="#1a48ee" stop-opacity="0.7"/><stop offset="1" stop-color="#0638f0" stop-opacity="0"/></linearGradient>
<linearGradient id="t1L2" gradientUnits="userSpaceOnUse" x1="0" y1="20" x2="14" y2="60"><stop offset="0" stop-color="#1a44e4"/><stop offset="0.5" stop-color="#0c2cd0"/><stop offset="1" stop-color="#0a24c0"/></linearGradient>
<linearGradient id="t1N" gradientUnits="userSpaceOnUse" x1="62" y1="58" x2="76" y2="76"><stop offset="0" stop-color="#0c1a90"/><stop offset="0.4" stop-color="#060c58"/><stop offset="1" stop-color="#03063a"/></linearGradient></defs>
<g clip-path="url(#tc0)"><rect width="80" height="80" fill="url(#t1bg)"/>
<clipPath id="t1L"><path d="M-2 12 C4 15 9 20 12.7 28.3 C15 35 17 48 17.9 56.6 C18.4 64 18.6 72 18.7 82 L-2 82 Z"/></clipPath>
<clipPath id="t1R"><path d="M-2 12 C4 15 9 20 12.7 28.3 C15 35 17 48 17.9 56.6 C18.4 64 18.6 72 18.7 82 L82 82 L82 -2 L-2 -2 Z"/></clipPath>
<g clip-path="url(#t1R)"><g filter="url(#tb1)"><path d="M10 18 C25 30 42 46 56 62 L45 84 H16 Z" fill="url(#t1A)"/></g>
<ellipse cx="34" cy="82" rx="9" ry="16" fill="#0618b0" opacity="0.6" filter="url(#tb2)"/></g>
<g clip-path="url(#t1L)"><rect width="30" height="82" fill="url(#t1L2)"/>
<path d="M-2 14 C5 18 9 24 11 34 C8 30 3 27 -2 26Z" fill="#2d5cec" filter="url(#tb1)"/>
<path d="M-2 50 C2 56 5 62 6.5 68 C7.8 73 8.6 77 9.2 82 L-2 82Z" fill="#2a55e6"/>
<path d="M-2 50 C2 56 5 62 6.5 68 C7.8 73 8.6 77 9.2 82" fill="none" stroke="#0a22c0" stroke-width="3" opacity="0.5" filter="url(#tb1)"/>
<path d="M-2 50 C2 56 5 62 6.5 68 C7.8 73 8.6 77 9.2 82" fill="none" stroke="#4a8af2" stroke-width="0.9" filter="url(#tb05)"/></g>
<path d="M-2 12 C4 15 9 20 12.7 28.3 C15 35 17 48 17.9 56.6 C18.4 64 18.6 72 18.7 82" fill="none" stroke="#5aa4f6" stroke-width="1.4" filter="url(#tb05)"/>
<clipPath id="t1b1"><path d="M82 19.6 C78 25 74 31 69.3 37.3 C64 44 59 49 54.4 53.6 C49 59 45 64 41 68.6 C38 72 35.5 77 33 82 L82 82 Z"/></clipPath>
<clipPath id="t1b2"><path d="M82 36.5 C76 43 71 48.5 66.3 53.6 C61 59 56 64 51.4 68.6 C48 72 45 77 42 82 L82 82 Z"/></clipPath>
<clipPath id="t1b3"><path d="M82 47 C76 53.5 70 60 64.8 65.6 C60 70.5 55 76 50 82 L82 82 Z"/></clipPath>
<g clip-path="url(#t1b1)"><rect width="82" height="82" fill="#2c5ef4"/>
<path d="M82 19.6 C78 25 74 31 69.3 37.3 C64 44 59 49 54.4 53.6 C49 59 45 64 41 68.6 C38 72 35.5 77 33 82" fill="none" stroke="#3f74f2" stroke-width="5" filter="url(#tb1)"/>
<path d="M82 36.5 C76 43 71 48.5 66.3 53.6 C61 59 56 64 51.4 68.6 C48 72 45 77 42 82" fill="none" stroke="#0a1cb0" stroke-width="5" opacity="0.8" filter="url(#tb1)"/></g>
<g clip-path="url(#t1b2)"><rect width="82" height="82" fill="#2654f2"/>
<path d="M82 36.5 C76 43 71 48.5 66.3 53.6 C61 59 56 64 51.4 68.6 C48 72 45 77 42 82" fill="none" stroke="#3f78f2" stroke-width="3" filter="url(#tb05)"/>
<path d="M82 47 C76 53.5 70 60 64.8 65.6 C60 70.5 55 76 50 82" fill="none" stroke="#08108a" stroke-width="6" opacity="0.9" filter="url(#tb1)"/></g>
<g clip-path="url(#t1b3)"><rect width="82" height="82" fill="url(#t1N)"/>
<path d="M82 47 C76 53.5 70 60 64.8 65.6 C60 70.5 55 76 50 82" fill="none" stroke="#2c60ea" stroke-width="3.2" filter="url(#tb1)"/>
<path d="M82 62.5 C76 67 70 72.5 66.3 76 L60 82" fill="none" stroke="#1a34b8" stroke-width="2" opacity="0.8" filter="url(#tb1)"/></g>
<path d="M82 19.6 C78 25 74 31 69.3 37.3 C64 44 59 49 54.4 53.6 C49 59 45 64 41 68.6 C38 72 35.5 77 33 82" fill="none" stroke="#4a86f2" stroke-width="0.8" filter="url(#tb05)"/>
<path d="M82 47 C76 53.5 70 60 64.8 65.6 C60 70.5 55 76 50 82" fill="none" stroke="#4a8af4" stroke-width="0.9" filter="url(#tb05)"/>
</g></svg>
<svg style="left:394.2px;top:468.0px" width="80.6" height="80.8" viewBox="0 0 80 80" preserveAspectRatio="none">
<defs><clipPath id="tc1"><rect width="80" height="80" rx="3.2"/></clipPath><linearGradient id="t2mg" gradientUnits="userSpaceOnUse" x1="0" y1="30" x2="0" y2="58"><stop offset="0" stop-color="#000"/><stop offset="0.5" stop-color="#666"/><stop offset="1" stop-color="#fff"/></linearGradient><mask id="t2m" maskUnits="userSpaceOnUse" x="-5" y="-5" width="90" height="90"><rect x="-5" y="-5" width="90" height="90" fill="url(#t2mg)"/></mask><linearGradient id="t2bg" x1="0" y1="0" x2="0" y2="1"><stop offset="0" stop-color="#050a10"/><stop offset="1" stop-color="#0a0a28"/></linearGradient>
<radialGradient id="t2s" gradientUnits="userSpaceOnUse" cx="39" cy="46" r="40"><stop offset="0" stop-color="#0a20b0"/><stop offset="0.5" stop-color="#081450"/><stop offset="0.9" stop-color="#050a16"/><stop offset="1" stop-color="#05080f"/></radialGradient>
<linearGradient id="t2rim" gradientUnits="userSpaceOnUse" x1="0" y1="40" x2="80" y2="40"><stop offset="0" stop-color="#5a20d0"/><stop offset="0.25" stop-color="#b040e0"/><stop offset="0.5" stop-color="#ff70b0"/><stop offset="0.75" stop-color="#c040e8"/><stop offset="1" stop-color="#7020e0"/></linearGradient>
<linearGradient id="t2rim2" gradientUnits="userSpaceOnUse" x1="0" y1="40" x2="80" y2="40"><stop offset="0" stop-color="#7030e0" stop-opacity="0.8"/><stop offset="0.3" stop-color="#e070e8"/><stop offset="0.5" stop-color="#ffd0c8"/><stop offset="0.7" stop-color="#e070f0"/><stop offset="1" stop-color="#9030f0" stop-opacity="0.9"/></linearGradient></defs>
<g clip-path="url(#tc1)"><rect width="80" height="80" fill="#06080e"/>
<rect width="80" height="80" fill="url(#t2bg)"/>
<ellipse cx="6" cy="30" rx="22" ry="26" fill="#07303a" opacity="0.8" filter="url(#tb7)"/>
<ellipse cx="82" cy="42" rx="14" ry="22" fill="#4a1070" opacity="0.75" filter="url(#tb7)"/>
<ellipse cx="74" cy="80" rx="22" ry="15" fill="#9420a4" opacity="0.9" filter="url(#tb4)"/>
<ellipse cx="8" cy="80" rx="20" ry="14" fill="#0c1040" opacity="0.9" filter="url(#tb4)"/>
<clipPath id="t2c"><circle cx="39.5" cy="28.5" r="43.6"/></clipPath>
<g clip-path="url(#t2c)"><circle cx="39.5" cy="28.5" r="44" fill="url(#t2s)"/>
<ellipse cx="40" cy="44" rx="22" ry="16" fill="#0a26c4" opacity="0.95" filter="url(#tb7)"/>
<ellipse cx="16" cy="36" rx="11" ry="12" fill="#0a5484" opacity="0.6" filter="url(#tb7)"/>
<ellipse cx="58" cy="42" rx="13" ry="12" fill="#0a14a8" opacity="0.7" filter="url(#tb7)"/>
<ellipse cx="33" cy="64" rx="17" ry="6.5" fill="#1a90f0" opacity="0.95" filter="url(#tb4)"/>
<ellipse cx="14" cy="56" rx="7" ry="7" fill="#0a6a9a" opacity="0.6" filter="url(#tb4)"/>
<g mask="url(#t2m)"><circle cx="39.5" cy="28.5" r="43" fill="none" stroke="url(#t2rim)" stroke-width="3.4" filter="url(#tb1)"/></g>
</g>
<g mask="url(#t2m)"><circle cx="39.5" cy="28.5" r="43.5" fill="none" stroke="url(#t2rim2)" stroke-width="0.9" filter="url(#tb05)"/></g>
</g></svg>
<svg style="left:478.1px;top:468.0px" width="80.6" height="80.8" viewBox="0 0 80 80" preserveAspectRatio="none">
<defs><clipPath id="tc2"><rect width="80" height="80" rx="3.2"/></clipPath><linearGradient id="t3sky" x1="0" y1="0" x2="0" y2="1"><stop offset="0" stop-color="#566266"/><stop offset="0.18" stop-color="#6e6866"/><stop offset="0.36" stop-color="#a06c62"/><stop offset="0.5" stop-color="#d4705e"/><stop offset="0.6" stop-color="#de765e"/></linearGradient>
<linearGradient id="t3w" x1="0" y1="0" x2="0" y2="1"><stop offset="0" stop-color="#c06c58"/><stop offset="0.15" stop-color="#8e5c4e"/><stop offset="0.4" stop-color="#4c4440"/><stop offset="0.7" stop-color="#2a302e"/><stop offset="1" stop-color="#1a2222"/></linearGradient>
<linearGradient id="t3bot" x1="0" y1="0" x2="0" y2="1"><stop offset="0" stop-color="#1e2626" stop-opacity="0"/><stop offset="1" stop-color="#161e1e" stop-opacity="0.9"/></linearGradient></defs>
<g clip-path="url(#tc2)"><rect width="80" height="80" fill="url(#t3sky)"/>
<rect y="47" width="80" height="33" fill="url(#t3w)"/>
<ellipse cx="42" cy="49.5" rx="18" ry="3.5" fill="#d87a60" opacity="0.75" filter="url(#tb2)"/>
<ellipse cx="40" cy="60" rx="6" ry="12" fill="#a06048" opacity="0.5" filter="url(#tb4)"/>
<circle cx="39.3" cy="40" r="7.5" fill="#ffd0b0" opacity="0.7" filter="url(#tb2)"/>
<circle cx="39.3" cy="40" r="3.9" fill="#fffaf2" filter="url(#tb05)"/>
<g filter="url(#tb05)">
<path d="M-1 33.6 L2 34.6 L4 34.2 L7 35.8 L10 36 L13 37.6 L16 38 L19 39.8 L22 40.6 L25 42.2 L28 43.4 L31 45 L35 46.6 L-1 46.6Z" fill="#3a2e2e"/>
<path d="M-1 41.5 C8 42.4 20 44.2 34 46.5 C40 47.5 46 48.5 50 49 C40 50.5 20 50.4 -1 51Z" fill="#6e7e86"/>
<path d="M-1 42.6 C10 43.8 22 45.6 36 47.6 L24 48 C14 47 6 46 -1 45.6Z" fill="#a8b6bc" opacity="0.8"/>
<path d="M3 36 C7 36.8 10 38 14 39.6 L11 40 C8 38.8 5 37.4 3 36Z" fill="#8c9096" opacity="0.6"/>
<path d="M-1 51 C14 50.6 28 50.2 40 49.6 C32 53.5 18 58 8 59.4 L-1 61Z" fill="#1a2a30"/>
<path d="M-1 51 C10 51 20 50.6 30 50.2 C20 52 10 52.8 -1 53.2Z" fill="#4a5e66" opacity="0.8"/>
<path d="M54 53.6 C62 51.8 72 51 81 50.6 V58.5 C72 57.8 62 56 54 53.6Z" fill="#38443c" opacity="0.95"/>
<path d="M50 48.3 C60 48 70 47.5 81 47.2 V50 C70 50 60 49.3 50 48.3Z" fill="#a8645a" opacity="0.7"/>
</g>
<rect y="56" width="80" height="24" fill="url(#t3bot)"/>
</g></svg>
<svg style="left:562.0px;top:468.0px" width="80.6" height="80.8" viewBox="0 0 80 80" preserveAspectRatio="none">
<defs><clipPath id="tc3"><rect width="80" height="80" rx="3.2"/></clipPath><linearGradient id="t4fold" gradientUnits="userSpaceOnUse" x1="60" y1="14" x2="82" y2="50"><stop offset="0" stop-color="#6a2a88"/><stop offset="0.35" stop-color="#8a2238"/><stop offset="0.7" stop-color="#6e1826"/><stop offset="1" stop-color="#4a2060"/></linearGradient><linearGradient id="t4blob" gradientUnits="userSpaceOnUse" x1="20" y1="26" x2="40" y2="64"><stop offset="0" stop-color="#6a3a96"/><stop offset="0.45" stop-color="#54307c"/><stop offset="0.8" stop-color="#301c48"/><stop offset="1" stop-color="#20122c"/></linearGradient></defs>
<g clip-path="url(#tc3)"><rect width="80" height="80" fill="#17111a"/>
<ellipse cx="40" cy="20" rx="30" ry="16" fill="#241a28" opacity="0.7" filter="url(#tb7)"/>
<g filter="url(#tb05)"><path d="M-1 30 C8 25 22 27 34 33 C48 40 62 50 64 58 C65 64 58 66 48 63 C34 59 14 50 -1 40 Z" fill="url(#t4blob)"/></g>
<path d="M4 42 C20 52 40 60 58 64 C62 62 64 60 64 57 C50 60 24 50 4 42Z" fill="#1a0f24" opacity="0.75" filter="url(#tb2)"/>
<g filter="url(#tb1)"><path d="M58 16 C62 11 72 10 82 16 L82 58 C76 56 70 50 68 42 C66 34 60 26 58 16Z" fill="url(#t4fold)"/></g>
<path d="M-2 35.0 C10 47.0 28 59.5 46 65.5 C58 69.0 67.5 66.0 66.5 54.0 C65.0 40.0 50.0 22.0 59.0 12.5 C65.0 8.5 76.0 11.0 84 18.0" fill="none" stroke="#d8642e" stroke-width="1.5" opacity="1" filter="url(#tb05)"/>
<path d="M-2 37.1 C10 48.7 28 60.6 46 66.4 C58 69.7 68.1 66.7 67.4 54.4 C65.9 40.1 51.4 21.7 60.4 12.4 C66.4 8.4 76.9 10.7 84 17.6" fill="none" stroke="#6a2a88" stroke-width="1.3" opacity="1" filter="url(#tb05)"/>
<path d="M-2 39.0 C10 50.2 28 61.5 46 67.1 C58 70.3 68.6 67.3 68.1 54.7 C66.7 40.3 52.7 21.5 61.7 12.2 C67.7 8.4 77.6 10.5 84 17.2" fill="none" stroke="#b8362c" stroke-width="1.2" opacity="1" filter="url(#tb05)"/>
<path d="M-2 40.7 C10 51.6 28 62.4 46 67.8 C58 70.9 69.0 67.9 68.8 55.0 C67.5 40.4 53.8 21.2 62.8 12.1 C68.8 8.3 78.3 10.2 84 16.9" fill="none" stroke="#f0b090" stroke-width="0.7" opacity="1" filter="url(#tb05)"/>
<path d="M-2 41.7 C10 52.4 28 62.8 46 68.2 C58 71.2 69.3 68.2 69.2 55.1 C67.9 40.4 54.5 21.1 63.5 12.1 C69.5 8.3 78.7 10.1 84 16.7" fill="none" stroke="#522a8a" stroke-width="1.5" opacity="1" filter="url(#tb05)"/>
<path d="M-2 43.8 C10 54.1 28 63.9 46 69.0 C58 71.9 69.9 68.9 70.0 55.5 C68.8 40.6 55.9 20.8 64.9 11.9 C70.9 8.2 79.5 9.8 84 16.2" fill="none" stroke="#d05a30" stroke-width="1.3" opacity="1" filter="url(#tb05)"/>
<path d="M-2 45.7 C10 55.5 28 64.8 46 69.8 C58 72.6 70.3 69.6 70.8 55.8 C69.6 40.7 57.1 20.6 66.1 11.8 C72.1 8.1 80.3 9.6 84 15.9" fill="none" stroke="#b0a4c8" stroke-width="0.7" opacity="1" filter="url(#tb05)"/>
<path d="M-2 46.7 C10 56.3 28 65.3 46 70.2 C58 72.9 70.6 69.9 71.2 55.9 C70.1 40.8 57.8 20.4 66.8 11.7 C72.8 8.1 80.7 9.4 84 15.7" fill="none" stroke="#7c2c8c" stroke-width="1.3" opacity="1" filter="url(#tb05)"/>
<path d="M-2 48.5 C10 57.8 28 66.3 46 70.9 C58 73.5 71.1 70.5 71.9 56.3 C70.9 40.9 59.0 20.2 68.0 11.6 C74.0 8.0 81.4 9.2 84 15.3" fill="none" stroke="#e07438" stroke-width="1.3" opacity="1" filter="url(#tb05)"/>
<path d="M-2 50.4 C10 59.3 28 67.2 46 71.7 C58 74.1 71.6 71.1 72.7 56.6 C71.7 41.0 60.3 19.9 69.3 11.5 C75.3 8.0 82.2 8.9 84 14.9" fill="none" stroke="#32184a" stroke-width="1.2" opacity="1" filter="url(#tb05)"/>
<path d="M-2 52.1 C10 60.7 26 68.2 44 71.9 C56 74.6 68 69.1 84 65.5" fill="none" stroke="#c23c2c" stroke-width="1.3" opacity="1" filter="url(#tb05)"/>
<path d="M-2 54.0 C10 62.2 26 69.1 44 72.6 C56 75.2 68 69.8 84 66.5" fill="none" stroke="#e8a080" stroke-width="0.8" opacity="1" filter="url(#tb05)"/>
<path d="M-2 55.1 C10 63.1 26 69.6 44 73.0 C56 75.5 68 70.3 84 67.0" fill="none" stroke="#5e2a8c" stroke-width="1.5" opacity="1" filter="url(#tb05)"/>
<path d="M-2 57.2 C10 64.8 26 70.7 44 73.7 C56 76.2 68 71.2 84 68.1" fill="none" stroke="#d4602c" stroke-width="1.4" opacity="1" filter="url(#tb05)"/>
<path d="M-2 59.2 C10 66.4 26 71.6 44 74.4 C56 76.8 68 72.0 84 69.1" fill="none" stroke="#c8b8d8" stroke-width="0.7" opacity="1" filter="url(#tb05)"/>
<path d="M-2 60.2 C10 67.2 26 72.1 44 74.7 C56 77.1 68 72.4 84 69.6" fill="none" stroke="#8a3494" stroke-width="1.4" opacity="1" filter="url(#tb05)"/>
<path d="M-2 62.2 C10 68.8 26 73.1 44 75.4 C56 77.7 68 73.2 84 70.6" fill="none" stroke="#40205c" stroke-width="1.3" opacity="1" filter="url(#tb05)"/>
<path d="M-2 64.1 C10 70.3 26 74.0 44 76.1 C56 78.2 68 74.0 84 71.5" fill="none" stroke="#c84a2c" stroke-width="1.3" opacity="1" filter="url(#tb05)"/>
<path d="M-2 65.9 C10 71.7 26 74.8 44 76.7 C56 78.8 68 74.8 84 72.5" fill="none" stroke="#a060b8" stroke-width="1.2" opacity="1" filter="url(#tb05)"/>
<path d="M-2 67.6 C10 73.1 26 75.7 44 77.3 C56 79.3 68 75.5 84 73.3" fill="none" stroke="#e07030" stroke-width="1.5" opacity="1" filter="url(#tb05)"/>
<path d="M-2 69.8 C10 74.8 26 76.7 44 78.1 C56 79.9 68 76.4 84 74.4" fill="none" stroke="#2c1a3c" stroke-width="1.4" opacity="1" filter="url(#tb05)"/>
<path d="M-2 71.8 C10 76.4 26 77.6 44 78.7 C56 80.5 68 77.2 84 75.4" fill="none" stroke="#7a3a9a" stroke-width="1.3" opacity="1" filter="url(#tb05)"/>
<path d="M69 17 C75 19 79 25 82 33 L82 52 C78 46 73 34 69 25Z" fill="#7c1a2a" filter="url(#tb1)"/>
<path d="M73 15 C77 19 80 23 82 29 V12Z" fill="#8a3aa0" filter="url(#tb05)"/>
<path d="M70 12 C74 13 78 16 82 20" fill="none" stroke="#f0d0d0" stroke-width="0.8" filter="url(#tb05)"/>
<path d="M-2 72 C10 74 22 78 30 82 L-2 82Z" fill="#c05026" filter="url(#tb05)"/>
<path d="M-2 77 C6 78 12 80 16 82 L-2 82Z" fill="#2a1a30" filter="url(#tb05)"/>
</g></svg>
<svg style="left:645.9px;top:468.0px" width="80.6" height="80.8" viewBox="0 0 80 80" preserveAspectRatio="none">
<defs><clipPath id="tc4"><rect width="80" height="80" rx="3.2"/></clipPath><linearGradient id="t5bg" x1="0" y1="0" x2="1" y2="1"><stop offset="0" stop-color="#6488b6"/><stop offset="0.4" stop-color="#4f74a6"/><stop offset="1" stop-color="#3c5c8c"/></linearGradient>
<linearGradient id="t5a" gradientUnits="userSpaceOnUse" x1="10" y1="10" x2="34" y2="40"><stop offset="0" stop-color="#587cac"/><stop offset="1" stop-color="#3e6094"/></linearGradient>
<linearGradient id="t5mid" gradientUnits="userSpaceOnUse" x1="40" y1="28" x2="76" y2="44"><stop offset="0" stop-color="#6a88ae"/><stop offset="0.5" stop-color="#8098b6"/><stop offset="1" stop-color="#8ea4bc"/></linearGradient>
<linearGradient id="t5b" gradientUnits="userSpaceOnUse" x1="14" y1="44" x2="58" y2="70"><stop offset="0" stop-color="#9cb4cc"/><stop offset="0.45" stop-color="#88a4c0"/><stop offset="0.8" stop-color="#5c88a8"/><stop offset="1" stop-color="#4a7898"/></linearGradient>
<linearGradient id="t5c" gradientUnits="userSpaceOnUse" x1="56" y1="40" x2="81" y2="76"><stop offset="0" stop-color="#c4d8e2"/><stop offset="0.5" stop-color="#b4ccd8"/><stop offset="1" stop-color="#9ab8c6"/></linearGradient>
<linearGradient id="t5d" gradientUnits="userSpaceOnUse" x1="6" y1="56" x2="34" y2="78"><stop offset="0" stop-color="#7c9cc0"/><stop offset="0.6" stop-color="#5478a4"/><stop offset="1" stop-color="#2c4a78"/></linearGradient>
<linearGradient id="t5e" gradientUnits="userSpaceOnUse" x1="2" y1="70" x2="26" y2="81"><stop offset="0" stop-color="#6c8cb4"/><stop offset="1" stop-color="#34507c"/></linearGradient></defs>
<g clip-path="url(#tc4)"><rect width="80" height="80" fill="url(#t5bg)"/>
<g filter="url(#tb05)">
<path d="M-1 26 C12 18 22 8 28 -1 H60 C52 14 38 30 20 42 C12 47 4 52 -1 55Z" fill="url(#t5a)"/>
<path d="M28 -1 C22 8 12 18 -1 26" fill="none" stroke="#7e9cc4" stroke-width="0.5"/>
<path d="M60 -1 C52 14 40 28 26 38" fill="none" stroke="#88a6c8" stroke-width="0.5"/>
<path d="M64 -1 C60 8 56 16 50 24 C60 22 72 22 81 24 V-1Z" fill="#8cb0cc"/>
<path d="M72 -1 C70 8 66 16 62 22 L81 24 V-1Z" fill="#a8c8da"/>
<path d="M78 -1 C77 6 75 12 73 18 L81 22 V-1Z" fill="#7ea4c0"/>
<path d="M81 24 C66 21 50 24 38 32 C30 37 24 42 20 46 C34 38 50 36 60 40 L81 48Z" fill="url(#t5mid)"/>
<path d="M-1 55 C10 48 24 38 38 35.5 C46 34.5 52 38 55 44 C58 50 60 62 60 81 H-1Z" fill="url(#t5b)"/>
<path d="M38 35.5 C46 34.5 52 38 55 44 C58 50 60 62 60 81 H81 V48 C72 42 56 36 38 35.5Z" fill="url(#t5c)"/>
<path d="M-1 62 C8 56 16 52 22 53 C28 54.5 31 62 33 70 C34 75 34.5 78 35 81 H-1Z" fill="url(#t5d)"/>
<path d="M-1 76 C6 72 14 68 20 70 C24 72 26 77 27 81 H-1Z" fill="url(#t5e)"/>
<path d="M10 81 C16 77 22 74 27 81Z" fill="#1c2c48"/>
</g>
<path d="M38 35.5 C46 34.5 52 38 55 44 C58 50 60 62 60 81" fill="none" stroke="#d4e4ea" stroke-width="0.7" opacity="0.8" filter="url(#tb05)"/>
</g></svg>

<div class="a" style="left:665px;top:570.6px;width:104px;height:26px;background:#fdfdfd;border:1px solid #e6e6e6;border-radius:4px"></div>

<!-- DROPDOWN -->
<div class="a" id="dd" style="left:665.2px;top:364.3px;width:122px;height:97px;background:#f9f9f9;border:1px solid #e2e2e2;border-radius:7px;box-shadow:0 5px 12px rgba(0,0,0,0.12)"></div>
<div class="a" style="left:669.6px;top:400px;width:112.8px;height:26.3px;background:#f0f0f0;border-radius:3.5px"></div>
<div class="a" style="left:670.5px;top:407px;width:2.5px;height:13px;background:#0f5fc5;border-radius:1.2px"></div>
<svg style="left:722px;top:408px" width="11" height="17" viewBox="0 0 11 17"><path d="M0.6 0.8 V13.2 L3.5 10.6 L5.7 15.6 L7.9 14.7 L5.8 9.8 H9.6 Z" fill="#fff" stroke="#151515" stroke-width="1.05" stroke-linejoin="round"/></svg>

<div class="t" id="tSettings" style="left:40.3px;top:12.2px;font-size:9.8px;color:#1b1b1b;letter-spacing:-0.058px;">Settings</div>
<div class="t" id="tFind" style="left:237.5px;top:12.1px;font-size:11.2px;color:#666;letter-spacing:-0.052px;">Find a setting</div>
<div class="t" id="tName" style="left:71px;top:57.0px;font-size:11.4px;color:#1b1b1b;letter-spacing:0.117px;-webkit-text-stroke:0.35px #1b1b1b">coco melon</div>
<div class="t" id="tMail" style="left:168px;top:70.6px;font-size:10.2px;color:#1b1b1b;letter-spacing:-0.194px;">outlook.com</div>
<div class="t" id="n1" style="left:48.4px;top:122.7px;font-size:11.4px;color:#1b1b1b;letter-spacing:-0.130px;">Home</div>
<div class="t" id="n2" style="left:48.4px;top:154.8px;font-size:11.4px;color:#1b1b1b;letter-spacing:-0.597px;">System</div>
<div class="t" id="n3" style="left:48.4px;top:187.0px;font-size:11.4px;color:#1b1b1b;letter-spacing:-0.010px;">Bluetooth &amp; devices</div>
<div class="t" id="n4" style="left:48.4px;top:219.2px;font-size:11.4px;color:#1b1b1b;letter-spacing:0.153px;">Network &amp; internet</div>
<div class="t" id="n5" style="left:48.4px;top:251.5px;font-size:11.4px;color:#1b1b1b;letter-spacing:-0.228px;">Personalisation</div>
<div class="t" id="n6" style="left:48.4px;top:283.8px;font-size:11.4px;color:#1b1b1b;letter-spacing:-0.256px;">Apps</div>
<div class="t" id="n7" style="left:48.4px;top:315.8px;font-size:11.4px;color:#1b1b1b;letter-spacing:-0.208px;">Accounts</div>
<div class="t" id="n8" style="left:48.4px;top:348.1px;font-size:11.4px;color:#1b1b1b;letter-spacing:-0.007px;">Time &amp; language</div>
<div class="t" id="n9" style="left:48.4px;top:380.3px;font-size:11.4px;color:#1b1b1b;letter-spacing:-0.338px;">Gaming</div>
<div class="t" id="n10" style="left:48.4px;top:412.6px;font-size:11.4px;color:#1b1b1b;letter-spacing:-0.136px;">Accessibility</div>
<div class="t" id="n11" style="left:48.4px;top:444.8px;font-size:11.4px;color:#1b1b1b;letter-spacing:-0.136px;">Privacy &amp; security</div>
<div class="t" id="n12" style="left:48.4px;top:477.0px;font-size:11.4px;color:#1b1b1b;letter-spacing:-0.039px;">Windows Update</div>
<div class="t" id="h1" style="left:261px;top:53.1px;font-size:22.6px;color:#5c5c5c;letter-spacing:-0.106px;-webkit-text-stroke:0.55px #5c5c5c">Personalisation</div>
<div class="t" id="h2" style="left:450.7px;top:53.1px;font-size:22.6px;color:#1a1a1a;letter-spacing:-0.383px;-webkit-text-stroke:0.55px #1a1a1a">Lock screen</div>
<div class="t" id="tBack" style="left:301px;top:315.3px;font-size:11.4px;color:#1b1b1b;letter-spacing:0.072px;-webkit-text-stroke:0.35px #1b1b1b">Back up your Pictures folder to automatically back up your lock screen image.</div>
<div class="t" id="tStart" style="left:310.3px;top:345.0px;font-size:11.4px;color:#1b1b1b;letter-spacing:-0.160px;">Start back up</div>
<div class="t" id="tPers" style="left:310.3px;top:404.0px;font-size:11.4px;color:#1b1b1b;letter-spacing:-0.256px;">Personalise your lock screen</div>
<div class="t" id="tRecent" style="left:310.4px;top:446.7px;font-size:11.4px;color:#1b1b1b;letter-spacing:-0.307px;">Recent images</div>
<div class="t" id="tBrowse" style="left:681.3px;top:575.6px;font-size:11.4px;color:#1b1b1b;letter-spacing:-0.030px;">Browse photos</div>
<div class="t" id="d1" style="left:679.5px;top:375.0px;font-size:11.4px;color:#1b1b1b;letter-spacing:0.074px;">Windows spotlight</div>
<div class="t" id="d2" style="left:679.5px;top:404.9px;font-size:11.4px;color:#1b1b1b;letter-spacing:-0.276px;">Picture</div>
<div class="t" id="d3" style="left:679.5px;top:434.5px;font-size:11.4px;color:#1b1b1b;letter-spacing:-0.303px;">Slideshow</div>
<!-- TASKBAR -->
<div class="a" id="taskbar" style="left:0;top:579.6px;width:825px;height:40px;background:#ededed;border-top:1.2px solid #c9c9c9"></div>
<svg style="left:0;top:580px" width="825" height="39" viewBox="0 580 825 39">
<defs>
<linearGradient id="kMoon" x1="0" y1="0" x2="0" y2="1"><stop offset="0" stop-color="#f9b83a"/><stop offset="1" stop-color="#ee7a0c"/></linearGradient>
<linearGradient id="kWin" gradientUnits="userSpaceOnUse" x1="153" y1="590.5" x2="172" y2="609"><stop offset="0" stop-color="#56c8fa"/><stop offset="0.5" stop-color="#1f9bee"/><stop offset="1" stop-color="#0a66d2"/></linearGradient>
<linearGradient id="kFold" x1="0" y1="0" x2="0" y2="1"><stop offset="0" stop-color="#fbd548"/><stop offset="1" stop-color="#f4b820"/></linearGradient>
<linearGradient id="kEdge" gradientUnits="userSpaceOnUse" x1="441" y1="592" x2="458" y2="608"><stop offset="0" stop-color="#2aa4e6"/><stop offset="0.6" stop-color="#0f5db0"/><stop offset="1" stop-color="#0c4a94"/></linearGradient>
<linearGradient id="kEdgeG" gradientUnits="userSpaceOnUse" x1="446" y1="589" x2="460" y2="598"><stop offset="0" stop-color="#2fb6d8"/><stop offset="0.6" stop-color="#4fc85a"/><stop offset="1" stop-color="#78d840"/></linearGradient>
<linearGradient id="kStore" x1="0" y1="0" x2="0" y2="1"><stop offset="0" stop-color="#1a6cc0"/><stop offset="1" stop-color="#0d3f80"/></linearGradient>
<linearGradient id="kOut" gradientUnits="userSpaceOnUse" x1="512" y1="590" x2="530" y2="608"><stop offset="0" stop-color="#5ac0f8"/><stop offset="0.5" stop-color="#2a8cec"/><stop offset="1" stop-color="#1a5cd0"/></linearGradient>
<linearGradient id="kGear" x1="0" y1="0" x2="0" y2="1"><stop offset="0" stop-color="#767c86"/><stop offset="1" stop-color="#4e545c"/></linearGradient>
<filter id="kb" x="-20%" y="-20%" width="140%" height="140%"><feGaussianBlur stdDeviation="0.35"/></filter>
</defs>
<!-- weather -->
<path d="M16.7 601.3 C19.2 602.6 23.6 601.8 26.2 599.4 L28.5 597.6 L34.8 597.6 C35.6 603.6 31.2 608.4 25.6 608.4 C21.4 608.4 18 605.8 16.7 601.3Z" fill="url(#kMoon)"/>
<rect x="22.6" y="585.8" width="19.2" height="12.2" rx="6.1" fill="#f7f7f7"/>
<!-- windows logo -->
<g fill="url(#kWin)"><rect x="153" y="590.5" width="9" height="8.9" rx="0.6"/><rect x="162.9" y="590.5" width="9" height="8.9" rx="0.6"/><rect x="153" y="600.3" width="9" height="8.9" rx="0.6"/><rect x="162.9" y="600.3" width="9" height="8.9" rx="0.6"/></g>
<!-- search pill -->
<rect x="182.8" y="586.5" width="175.7" height="25.8" rx="12.9" fill="#fbfbfb" stroke="#dcdcdc" stroke-width="0.8"/>
<circle cx="196.4" cy="598.4" r="4.3" fill="none" stroke="#222" stroke-width="1.3"/><path d="M199.6 601.6 L203 605" stroke="#222" stroke-width="1.4" stroke-linecap="round"/>
<!-- shoes -->
<g filter="url(#kb)">
<path d="M331.6 593.6 C332 591.4 337 590.2 342 590.2 C347 590.2 351.4 591.6 351.6 593.6 C351.8 596 347 598.2 341 598.2 C335.6 598.2 331.2 596.2 331.6 593.6Z" fill="#eeb49c"/>
<path d="M338 593.4 C338.4 592 341 591.6 343.4 591.8 C345.6 592 346.8 593 346.4 594.2 C346 595.6 343.6 596.2 341.4 596 C339 595.8 337.6 594.8 338 593.4Z" fill="#c4907c"/>
<path d="M346 591.4 C344.8 593.4 344.6 595.4 345.6 597" fill="none" stroke="#f6c8b0" stroke-width="0.9"/>
<path d="M321.2 592 C324.4 591.2 326.6 593.2 328.4 596 C330.2 598.8 332.2 601.6 336.6 603.4" fill="none" stroke="#f4b696" stroke-width="1.1" stroke-linecap="round"/>
<path d="M334.6 598.2 C334.2 600 335 601.4 336.8 602.4" fill="none" stroke="#eeb09a" stroke-width="0.8"/>
<path d="M318 597 C318.6 595.4 320.6 595.4 321.8 596.6 C322.8 597.8 322.6 599.4 323.6 600.8 C325 602.8 327.6 603 330 603.6 C332.6 604.2 335 605.6 335 607 C333 607.8 328.6 607.8 326.2 607.4 C324.6 606.2 322.4 604.2 320.8 603.4 L320.6 606.4 L319.2 606.4 C319.4 603 317.6 599.6 318 597Z" fill="#c2651e"/>
<path d="M321.8 597.4 C323.6 597 325.6 597.2 327 598" fill="none" stroke="#b85a18" stroke-width="1"/>
<path d="M326 604.4 C328 603.4 331 603.8 333.6 605.2 M327.6 606.6 C329.6 605.4 332 605.6 334 606.4" fill="none" stroke="#8e4210" stroke-width="0.7"/>
<path d="M337.4 604.6 C339.6 603.6 342.6 601 345.4 599.8 C348 598.8 352 599 353.8 600.6 C354.8 601.8 354.6 604.6 354.2 605.8 L350.4 606 L350.2 604.9 C347 605.4 343.4 606.8 340.4 606.8 C337.6 606.8 336.4 605.6 337.4 604.6Z" fill="#2b2d62"/>
<path d="M346 599.6 C348 599 351.6 599.2 353.4 600.4" fill="none" stroke="#e8e0d0" stroke-width="0.8"/>
<path d="M342 602.4 C343.6 603 345 603 346.4 602.4" fill="none" stroke="#5a5e94" stroke-width="0.6"/>
</g>
<!-- task view -->
<rect x="368.7" y="595.6" width="14.8" height="12.4" rx="1.2" fill="#262626"/>
<rect x="373.8" y="590.5" width="14.4" height="12.4" rx="1.4" fill="#f7f7f7" stroke="#e0e0e0" stroke-width="0.5"/>
<rect x="373.8" y="595.6" width="9.7" height="7.3" fill="#bdbdbd"/>
<!-- folder -->
<path d="M404.4 592.6 Q404.4 591 406 591 H411 Q412 591 412.8 591.8 L414.2 593.2 H422.3 Q423.9 593.2 423.9 594.8 V606.4 Q423.9 608 422.3 608 H406 Q404.4 608 404.4 606.4Z" fill="#e3a514"/>
<path d="M404.4 595.2 H423.9 V606.4 Q423.9 608 422.3 608 H406 Q404.4 608 404.4 606.4Z" fill="url(#kFold)"/>
<path d="M408.6 604.4 Q408.6 602.9 410.1 602.9 H418.1 Q419.6 602.9 419.6 604.4 V608 H408.6Z" fill="#1a7fd6"/>
<!-- edge -->
<circle cx="449.6" cy="599.3" r="9.9" fill="url(#kEdge)"/>
<path d="M441.2 597.6 C441 603.4 445.6 609 452 609.2 C456 609.2 458.6 606.8 459.4 603.8 C456 606.2 450 605.6 447.4 601.6 C446 599.4 446.4 597 448 595.4 C445.2 594.8 442.4 595.8 441.2 597.6Z" fill="#115ab0"/>
<path d="M440 597 C440.8 591.8 445.2 589.4 449.8 589.4 C455.6 589.4 459.5 593.4 459.5 598.2 C459.5 601.6 457.2 603.6 454.6 603.6 C452.4 603.6 451 602.6 451 601.4 C451 600.4 452 600 452 598.6 C452 596.6 450 594.6 447 594.6 C444 594.6 441.2 595.6 440 597Z" fill="url(#kEdgeG)"/>
<path d="M448.3 597.7 C447.4 599.7 448 601.9 450 603.3 C452.4 604.9 455.4 604.7 457.6 603.3 C455.4 603.8 453.2 603.4 452 602.2 C450.8 601 450.8 599.4 451.6 597.8 C450.6 597.2 449.2 597.2 448.3 597.7Z" fill="#f2f7fc"/>
<!-- store -->
<path d="M480.3 594 V592.4 Q480.3 590.8 481.9 590.8 H487.2 Q488.8 590.8 488.8 592.4 V594" fill="none" stroke="#3cb0f4" stroke-width="1.3"/>
<path d="M475.3 594.9 Q475.3 593.7 476.5 593.7 H492.5 Q493.7 593.7 493.7 594.9 V605.6 Q493.7 608.7 490.6 608.7 H478.4 Q475.3 608.7 475.3 605.6Z" fill="url(#kStore)"/>
<rect x="481.1" y="598" width="3.3" height="3.3" fill="#f25022"/><rect x="485" y="598" width="3.3" height="3.3" fill="#7fba00"/><rect x="481.1" y="601.9" width="3.3" height="3.3" fill="#00a4ef"/><rect x="485" y="601.9" width="3.3" height="3.3" fill="#ffb900"/>
<!-- outlook -->
<path d="M513.8 597.8 L520.6 591.3 Q522 590.1 523.4 591.3 L529.3 596.8 V606.2 Q529.3 608.4 527.1 608.4 H516 Q513.8 608.4 513.8 606.2Z" fill="url(#kOut)"/>
<path d="M514.6 597 L520.8 591.4 Q522 590.4 523.2 591.4 L529.1 596.8 L527.6 598.6 L522 593.6 L516.6 598.6Z" fill="#3c4cc8"/>
<path d="M516.8 598.6 L522 593.8 L527.4 598.6 L524 601.6 L519.6 601.2Z" fill="#54b4f6"/>
<path d="M518 600.2 L522 596.6 L525.8 600 L522 603.2Z" fill="#8ad8fc" opacity="0.9"/>
<path d="M529.3 598.2 L519 608.4 H527.1 Q529.3 608.4 529.3 606.2Z" fill="#3cc4f8"/>
<path d="M513.8 599 L524.4 608.4 H516 Q513.8 608.4 513.8 606.2Z" fill="#1e8ae8"/>
<rect x="510.7" y="598.7" width="8" height="8" rx="1.8" fill="#1558c4"/><circle cx="514.7" cy="602.7" r="2" fill="none" stroke="#fff" stroke-width="1.15"/>
<rect x="518.1" y="612.5" width="4.7" height="2" rx="1" fill="#747474"/>
<!-- monitor app -->
<rect x="546" y="591.7" width="19.8" height="15" rx="1.2" fill="#9cdafc"/>
<path d="M546 592.9 Q546 591.7 547.2 591.7 H564.6 Q565.8 591.7 565.8 592.9 V599 L563.4 596.6 L561 600 L558.6 595.2 L556 600.6 L553.2 595.6 L550.6 600 L548.4 597 L546 599.4Z" fill="#0e5cb6"/>
<path d="M546 599.4 L548.4 597 L550.6 600 L553.2 595.6 L556 600.6 L558.6 595.2 L561 600 L563.4 596.6 L565.8 599 V602.6 L563.6 600.8 L561.2 603.6 L558.8 599.6 L556.2 604 L553.4 599.8 L550.8 603.4 L548.4 600.8 L546 603Z" fill="#2196ea"/>
<rect x="553.5" y="612.5" width="4.7" height="2" rx="1" fill="#747474"/>
<!-- settings -->
<rect x="576.2" y="584.2" width="30.7" height="31.5" rx="3.5" fill="#fafafa" stroke="#e6e6e6" stroke-width="0.8"/>
<g transform="translate(591.5 599.7) rotate(30) scale(0.94)">
<path id="gearp" d="M-2 -9.7 H2 L2.7 -7.2 A7.4 7.4 0 0 1 4.9 -5.9 L7.4 -6.6 L9.4 -3.1 L7.6 -1.3 A7.4 7.4 0 0 1 7.6 1.3 L9.4 3.1 L7.4 6.6 L4.9 5.9 A7.4 7.4 0 0 1 2.7 7.2 L2 9.7 H-2 L-2.7 7.2 A7.4 7.4 0 0 1 -4.9 5.9 L-7.4 6.6 L-9.4 3.1 L-7.6 1.3 A7.4 7.4 0 0 1 -7.6 -1.3 L-9.4 -3.1 L-7.4 -6.6 L-4.9 -5.9 A7.4 7.4 0 0 1 -2.7 -7.2Z" fill="url(#kGear)" stroke="url(#kGear)" stroke-width="0.8" stroke-linejoin="round"/>
<circle r="5.2" fill="#f6f6f6"/><circle r="3.7" fill="#1562cc"/>
</g>
<rect x="585.5" y="612.3" width="12.6" height="2.6" rx="1.3" fill="#0f5fd0"/>
<!-- tray -->
<path d="M664.6 601.9 L668.7 597.5 L672.8 601.9" fill="none" stroke="#222" stroke-width="1.2" stroke-linecap="round" stroke-linejoin="round"/>
<path d="M691 603.4 Q688.2 603.4 688.2 600.8 Q688.2 598.6 690.6 598.2 Q691 594.8 694.6 594.8 Q697.2 594.8 698.2 597.2 Q701.2 597.4 701.2 600.4 Q701.2 603.4 698.4 603.4Z" fill="#8e8e8e" stroke="#2c2c2c" stroke-width="0.9" stroke-linejoin="round"/>
<g fill="none" stroke="#222" stroke-width="0.9" stroke-linejoin="round"><path d="M722.6 593.6 H715 Q714 593.6 714 594.6 V601.6 Q714 602.6 715 602.6 H723.4"/><path d="M718.6 602.6 V605.4 M716.2 605.5 H723.6 M725.2 600.4 V605.4"/><rect x="723.6" y="593.2" width="3.2" height="4.6" rx="1"/><path d="M725.2 597.8 V600.6 M724.6 592 V593.2 M725.8 592 V593.2"/></g>
<g fill="none" stroke="#222" stroke-width="0.9" stroke-linejoin="round" stroke-linecap="round"><path d="M733.6 597.8 H735.6 L738.6 595 V604.2 L735.6 601.4 H733.6Z"/><path d="M740.4 597.6 Q741.6 599.6 740.4 601.6"/><path d="M742.2 596.2 Q744.2 599.6 742.2 603"/><path d="M744 594.8 Q746.8 599.6 744 604.4"/></g>
</svg>

<div class="t" id="tSearch" style="left:211.9px;top:592.3px;font-size:11.6px;color:#5c5c5c;letter-spacing:-0.707px;">Search</div>
<div class="t" id="tTime" style="left:786.9px;top:585.8px;font-size:9.4px;color:#1b1b1b;letter-spacing:-0.317px;">16:37</div>
<div class="t" id="tDate" style="left:759.7px;top:598.1px;font-size:9.4px;color:#1b1b1b;letter-spacing:0.275px;">09/01/2026</div>
<div class="t" id="tTemp" style="left:28.2px;top:584.1px;font-size:9px;color:#1b1b1b;letter-spacing:0.000px;-webkit-text-stroke:0.2px #1b1b1b">9<span style="font-size:6.6px;position:relative;top:-2px;left:-0.3px">°</span></div>
</body></html>
